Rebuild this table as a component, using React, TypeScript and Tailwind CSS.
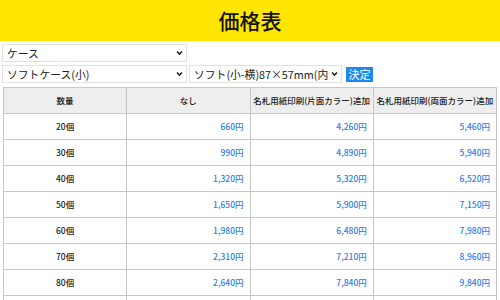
const rows = [
  { qty: "20個", a: "660円", b: "4,260円", c: "5,460円" },
  { qty: "30個", a: "990円", b: "4,890円", c: "5,940円" },
  { qty: "40個", a: "1,320円", b: "5,320円", c: "6,520円" },
  { qty: "50個", a: "1,650円", b: "5,900円", c: "7,150円" },
  { qty: "60個", a: "1,980円", b: "6,480円", c: "7,980円" },
  { qty: "70個", a: "2,310円", b: "7,210円", c: "8,960円" },
  { qty: "80個", a: "2,640円", b: "7,840円", c: "9,840円" },
  { qty: "90個", a: "2,970円", b: "8,470円", c: "10,720円" },
];

function Chevron() {
  return (
    <svg
      className="pointer-events-none absolute right-[4px] top-1/2 -translate-y-1/2"
      width="7"
      height="5"
      viewBox="0 0 7 5"
    >
      <path d="M1 1l2.5 2.5L6 1" fill="none" stroke="#222" strokeWidth="1.6" />
    </svg>
  );
}

function Select({ value, width }: { value: string; width: string }) {
  return (
    <div className={`relative ${width}`}>
      <select
        defaultValue={value}
        className="block h-[18px] w-full appearance-none overflow-hidden rounded-none border border-[#e2e2e2] bg-white pl-[4px] pr-[13px] text-[10.8px] leading-[16px] text-[#222] outline-none"
      >
        <option>{value}</option>
      </select>
      <Chevron />
    </div>
  );
}

export default function App() {
  const th = "h-[26px] border border-[#c8c8c8] bg-[#eeeeee] text-center text-[8.5px] font-medium text-[#222]";
  const qtd = "h-[26px] border border-[#c8c8c8] text-center text-[8.5px] font-medium text-[#222]";
  const ptd = "h-[26px] border border-[#c8c8c8] pr-[6px] text-right text-[8.5px] font-medium text-[#2b7de9]";

  return (
    <div className="h-[300px] w-[500px] overflow-hidden bg-white font-['Noto_Sans_CJK_JP','Noto_Sans',sans-serif]">
      <div className="flex h-[41px] items-center justify-center bg-[#ffe600]">
        <h1 className="text-[21px] font-medium text-[#111]">価格表</h1>
      </div>

      <div className="flex flex-col gap-[3px] px-[2px] pt-[3px]">
        <Select value="ケース" width="w-[185px]" />
        <div className="flex items-center gap-[2px]">
          <Select value="ソフトケース(小)" width="w-[185px]" />
          <Select value="ソフト(小-横)87×57mm(内寸)" width="w-[153px]" />
          <button className="ml-[2px] h-[15px] w-[27px] bg-[#1e88f0] text-[11px] leading-[15px] text-white">
            決定
          </button>
        </div>
      </div>

      <div className="px-[3px] pt-[4px]">
        <table className="w-full table-fixed border-collapse">
          <thead>
            <tr>
              <th className={th}>数量</th>
              <th className={th}>なし</th>
              <th className={th}>名札用紙印刷(片面カラー)追加</th>
              <th className={th}>名札用紙印刷(両面カラー)追加</th>
            </tr>
          </thead>
          <tbody>
            {rows.map((r) => (
              <tr key={r.qty}>
                <td className={qtd}>{r.qty}</td>
                <td className={ptd}>{r.a}</td>
                <td className={ptd}>{r.b}</td>
                <td className={ptd}>{r.c}</td>
              </tr>
            ))}
          </tbody>
        </table>
      </div>
    </div>
  );
}
